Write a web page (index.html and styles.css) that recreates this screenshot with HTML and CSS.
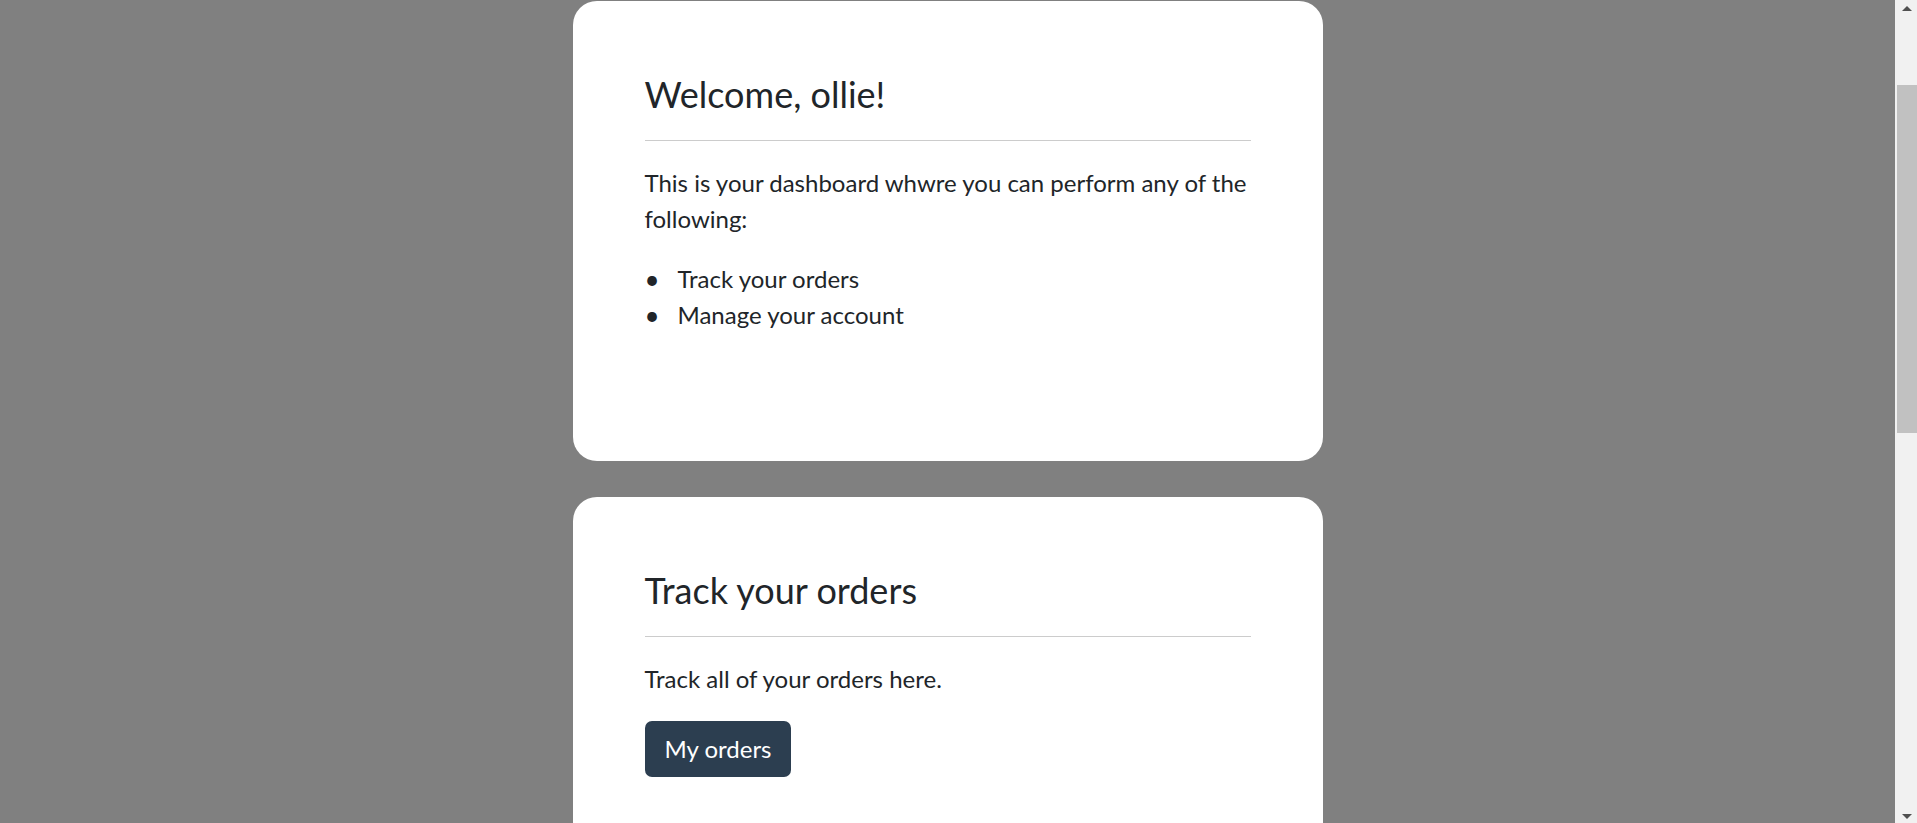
FILE: index.html
```html
<!DOCTYPE html>
<html lang="en">
<head>
<meta charset="utf-8">
<title>Dashboard</title>
<link rel="stylesheet" href="styles.css">
</head>
<body>
<main class="page">
  <section class="card">
    <h2 class="card-title">Welcome, ollie!</h2>
    <hr class="divider">
    <p class="card-text">This is your dashboard whwre you can perform any of the following:</p>
    <ul class="card-list">
      <li>Track your orders</li>
      <li>Manage your account</li>
    </ul>
  </section>
  <section class="card">
    <h2 class="card-title">Track your orders</h2>
    <hr class="divider">
    <p class="card-text">Track all of your orders here.</p>
    <a class="btn" href="#">My orders</a>
  </section>
</main>
<div class="scrollbar" aria-hidden="true">
  <div class="scroll-arrow up"></div>
  <div class="scroll-track">
    <div class="scroll-thumb"></div>
  </div>
  <div class="scroll-arrow down"></div>
</div>
</body>
</html>
```
FILE: styles.css
```css
html, body {
  margin: 0;
  padding: 0;
}
body {
  background: #808080;
  font-family: Lato, "Open Sans", sans-serif;
  color: #212529;
  padding-right: 22px;
}
.page {
  display: flex;
  flex-direction: column;
  align-items: center;
  gap: 36px;
  padding: 1px 0 260px;
}
.card {
  box-sizing: border-box;
  width: 750px;
  min-height: 460px;
  background: #ffffff;
  border-radius: 24px;
  padding: 72px;
}
.card-title {
  margin: 0;
  font-size: 36px;
  font-weight: 400;
  line-height: 1.2;
}
.divider {
  margin: 24px 0;
  border: 0;
  border-top: 1px solid #cccccc;
  height: 0;
}
.card-text {
  margin: 0 0 24px;
  font-size: 24px;
  line-height: 36px;
}
.card-list {
  margin: 0;
  padding: 0;
  list-style: none;
  font-size: 24px;
  line-height: 36px;
}
.card-list li {
  display: flex;
}
.card-list li::before {
  content: "\2022";
  width: 33px;
  flex: none;
  font-size: 26px;
}
.btn {
  display: inline-block;
  background: #2c3e50;
  color: #ffffff;
  text-decoration: none;
  font-size: 24px;
  line-height: 36px;
  padding: 10px 20px;
  border-radius: 7px;
}

/* browser scrollbar as seen in the screenshot */
.scrollbar {
  position: fixed;
  top: 0;
  right: 0;
  width: 22px;
  height: 100vh;
  background: #f1f1f1;
  display: flex;
  flex-direction: column;
}
.scroll-arrow {
  height: 22px;
  flex: none;
  display: flex;
  justify-content: center;
  align-items: center;
}
.scroll-arrow::before {
  content: "";
  width: 0;
  height: 0;
  border-left: 5px solid transparent;
  border-right: 5px solid transparent;
}
.scroll-arrow.up::before {
  border-bottom: 5px solid #505050;
  margin-left: 1px;
  margin-top: -6px;
}
.scroll-arrow.down::before {
  border-top: 5px solid #505050;
  margin-left: 1px;
  margin-top: 8px;
}
.scroll-track {
  flex: 1;
  padding: 63px 0 0 2px;
}
.scroll-thumb {
  height: 348px;
  background: #c1c1c1;
}
```
